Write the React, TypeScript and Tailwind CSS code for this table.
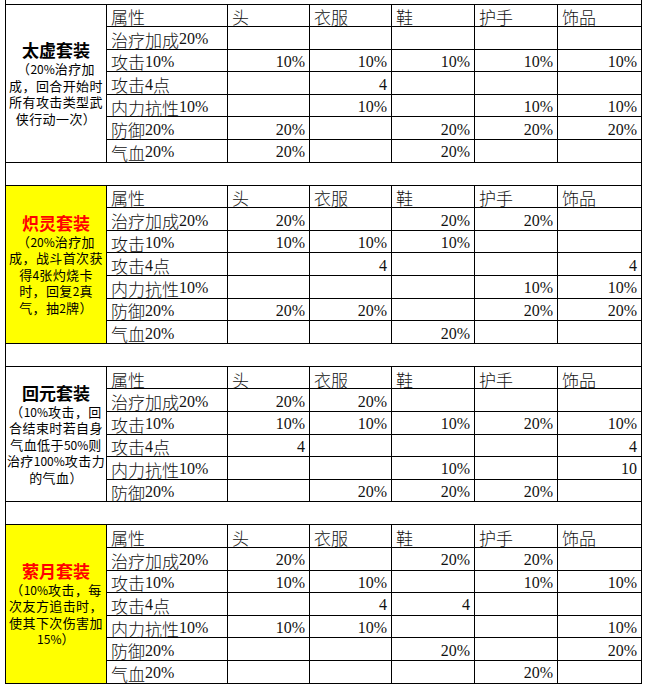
import React from "react"

type Row = [string, string[]]

type Block = {
  title: string
  desc: string[]
  highlight: boolean
  rows: Row[]
}

const headers = ["属性", "头", "衣服", "鞋", "护手", "饰品"]

const blocks: Block[] = [
  {
    title: "太虚套装",
    desc: ["（20%治疗加", "成，回合开始时", "所有攻击类型武", "侠行动一次）"],
    highlight: false,
    rows: [
      ["治疗加成20%", ["", "", "", "", ""]],
      ["攻击10%", ["10%", "10%", "10%", "10%", "10%"]],
      ["攻击4点", ["", "4", "", "", ""]],
      ["内力抗性10%", ["", "10%", "", "10%", "10%"]],
      ["防御20%", ["20%", "", "20%", "20%", "20%"]],
      ["气血20%", ["20%", "", "20%", "", ""]],
    ],
  },
  {
    title: "炽灵套装",
    desc: ["（20%治疗加", "成，战斗首次获", "得4张灼烧卡", "时，回复2真", "气，抽2牌）"],
    highlight: true,
    rows: [
      ["治疗加成20%", ["20%", "", "20%", "20%", ""]],
      ["攻击10%", ["10%", "10%", "10%", "", ""]],
      ["攻击4点", ["", "4", "", "", "4"]],
      ["内力抗性10%", ["", "", "", "10%", "10%"]],
      ["防御20%", ["20%", "20%", "", "20%", "20%"]],
      ["气血20%", ["", "", "20%", "", ""]],
    ],
  },
  {
    title: "回元套装",
    desc: ["（10%攻击，回", "合结束时若自身", "气血低于50%则", "治疗100%攻击力", "的气血）"],
    highlight: false,
    rows: [
      ["治疗加成20%", ["20%", "20%", "", "", ""]],
      ["攻击10%", ["10%", "10%", "10%", "20%", "10%"]],
      ["攻击4点", ["4", "", "", "", "4"]],
      ["内力抗性10%", ["", "", "10%", "", "10"]],
      ["防御20%", ["", "20%", "20%", "20%", ""]],
    ],
  },
  {
    title: "萦月套装",
    desc: ["（10%攻击，每", "次友方追击时，", "使其下次伤害加", "15%）"],
    highlight: true,
    rows: [
      ["治疗加成20%", ["20%", "", "20%", "20%", ""]],
      ["攻击10%", ["10%", "10%", "", "10%", "10%"]],
      ["攻击4点", ["", "4", "4", "", ""]],
      ["内力抗性10%", ["10%", "10%", "", "", "10%"]],
      ["防御20%", ["", "", "20%", "", "20%"]],
      ["气血20%", ["", "", "", "20%", ""]],
    ],
  },
]

const isLatin = (s: string) => /^[\x00-\x7f]+$/.test(s)

// CJK in thin sans, latin runs in serif like the sheet's SimSun digits
const CellText = ({ text }: { text: string }) => (
  <>
    {text.split(/([\x00-\x7f]+)/).map((part, i) =>
      part === "" ? null : isLatin(part) ? (
        <span key={i} className="text-[16px] font-['Liberation_Serif',serif]">
          {part}
        </span>
      ) : (
        <span key={i} className="font-light">
          {part}
        </span>
      )
    )}
  </>
)

const DescText = ({ text }: { text: string }) => (
  <>
    {text.split(/([\x00-\x7f]+)/).map((part, i) =>
      part === "" ? null : isLatin(part) ? (
        <span key={i} className="text-[12px] tracking-normal">
          {part}
        </span>
      ) : (
        <span key={i}>{part}</span>
      )
    )}
  </>
)

const cell = "border border-black p-0 align-middle"

const CellBox = ({ text, right }: { text: string; right?: boolean }) => (
  <div
    className={`flex items-center h-[21px] pt-[3px] px-[4px] leading-none whitespace-nowrap ${
      right ? "justify-end" : "justify-start"
    }`}
  >
    <CellText text={text} />
  </div>
)

const SetBlock = ({ block }: { block: Block }) => (
  <>
    <tr className="h-[22.6px]">
      <td
        rowSpan={block.rows.length + 1}
        className={`border border-black p-0 text-center align-middle font-['Noto_Sans_CJK_SC',sans-serif] ${
          block.highlight ? "bg-[#ffff00]" : "bg-white"
        }`}
      >
        <div
          className={`text-[17px] leading-[22px] font-bold ${
            block.highlight ? "text-[#ff0000]" : "text-black"
          }`}
        >
          {block.title}
        </div>
        {block.desc.map((line) => (
          <div
            key={line}
            className="h-[16.5px] text-[13px] leading-[16.5px] tracking-[0.4px] text-black whitespace-nowrap"
          >
            <DescText text={line} />
          </div>
        ))}
      </td>
      {headers.map((h) => (
        <td key={h} className={cell}>
          <CellBox text={h} />
        </td>
      ))}
    </tr>
    {block.rows.map(([name, values]) => (
      <tr key={name} className="h-[22.6px]">
        <td className={cell}>
          <CellBox text={name} />
        </td>
        {values.map((v, i) => (
          <td key={i} className={cell}>
            <CellBox text={v} right />
          </td>
        ))}
      </tr>
    ))}
  </>
)

const Spacer = ({ h }: { h: string }) => (
  <tr className={h}>
    <td colSpan={7} className="border-x border-black p-0" />
  </tr>
)

export default function App() {
  return (
    <div className="w-[646px] h-[690px] bg-white overflow-hidden">
      <table className="table-fixed border-collapse ml-[5px] w-[636px] text-[17px] text-[#111] font-['Noto_Sans_CJK_SC',sans-serif]">
        <colgroup>
          <col className="w-[101px]" />
          <col className="w-[121px]" />
          <col className="w-[82px]" />
          <col className="w-[82px]" />
          <col className="w-[83px]" />
          <col className="w-[83px]" />
          <col className="w-[84px]" />
        </colgroup>
        <tbody>
          <Spacer h="h-[4px]" />
          {blocks.map((b, i) => (
            <React.Fragment key={b.title}>
              <SetBlock block={b} />
              {i < blocks.length - 1 && <Spacer h="h-[23px]" />}
            </React.Fragment>
          ))}
        </tbody>
      </table>
    </div>
  )
}
